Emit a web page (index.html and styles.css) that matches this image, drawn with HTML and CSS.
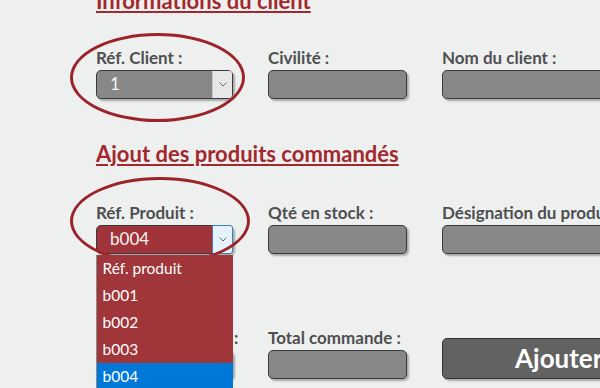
FILE: index.html
```html
<!DOCTYPE html>
<html lang="fr">

<head>
    <meta charset="UTF-8">
    <title>Commande client</title>
    <link rel="stylesheet" href="styles.css">
</head>

<body>
    <div class="page">
        <!-- Client -->
        <section class="block block-client">
            <h2 class="block-title">Informations du client</h2>
            <div class="row">
                <div class="field">
                    <span class="ring ring-client"></span>
                    <label class="label">Réf. Client :</label>
                    <div class="box combo">
                        <span class="combo-value">1</span>
                        <span class="combo-btn">
                            <svg width="8" height="5" viewBox="0 0 8 5"><path d="M0.5 0.5 L4 4 L7.5 0.5" fill="none" stroke="#6a6a6a" stroke-width="1"/></svg>
                        </span>
                    </div>
                </div>
                <div class="field">
                    <label class="label">Civilité :</label>
                    <div class="box"></div>
                </div>
                <div class="field">
                    <label class="label">Nom du client :</label>
                    <div class="box"></div>
                </div>
            </div>
        </section>

        <!-- Produits -->
        <section class="block">
            <h2 class="block-title">Ajout des produits commandés</h2>
            <div class="row row-products">
                <div class="field">
                    <span class="ring ring-product"></span>
                    <label class="label">Réf. Produit :</label>
                    <div class="box combo combo-active">
                        <span class="combo-value">b004</span>
                        <span class="combo-btn">
                            <svg width="8" height="5" viewBox="0 0 8 5"><path d="M0.5 0.5 L4 4 L7.5 0.5" fill="none" stroke="#5a6a7a" stroke-width="1"/></svg>
                        </span>
                        <ul class="dropdown">
                            <li>Réf. produit</li>
                            <li>b001</li>
                            <li>b002</li>
                            <li>b003</li>
                            <li class="selected">b004</li>
                        </ul>
                    </div>
                </div>
                <div class="field">
                    <label class="label">Qté en stock :</label>
                    <div class="box"></div>
                </div>
                <div class="field">
                    <label class="label">Désignation du produit :</label>
                    <div class="box"></div>
                </div>

                <div class="field field-hidden">
                    <label class="label">Qté commandée :</label>
                    <div class="box"></div>
                </div>
                <div class="field">
                    <label class="label">Total commande :</label>
                    <div class="box"></div>
                </div>
                <div class="field field-button">
                    <button class="add-button">Ajouter</button>
                </div>
            </div>
        </section>
    </div>
</body>

</html>
```

FILE: styles.css
```css
body {
    margin: 0;
    height: 388px;
    overflow: hidden;
    background-color: #eef0ef;
    font-family: Lato, "Liberation Sans", sans-serif;
}

.page {
    padding-left: 96px;
    margin-top: -12px;
}

.block-client {
    margin-bottom: 42px;
}

.block-title {
    margin: 0 0 36px;
    font-size: 22px;
    line-height: 26px;
    font-weight: 700;
    color: #a2282d;
    text-decoration: underline;
    text-decoration-thickness: 2px;
    text-underline-offset: 2px;
    white-space: nowrap;
}

.block-client .block-title {
    margin-bottom: 34px;
}

.row {
    display: grid;
    grid-template-columns: 137px 139px 200px;
    column-gap: 35px;
}

.row-products {
    row-gap: 74px;
}

.field {
    position: relative;
}

.label {
    display: block;
    margin-bottom: 2px;
    font-size: 17px;
    font-weight: 700;
    line-height: 20px;
    color: #4f4f4f;
    white-space: nowrap;
}

/* label of the first column, mostly hidden by the open list */
.field-hidden .label {
    letter-spacing: 0.6px;
}

.box {
    box-sizing: border-box;
    height: 29px;
    background-color: #888888;
    border: 1.5px solid #3b3b3b;
    border-radius: 5px;
    box-shadow: 2px 2px 2px rgba(0, 0, 0, 0.3);
}

/* combo boxes */
.combo {
    display: flex;
    position: relative;
}

.combo-value {
    flex: 1;
    padding-left: 13px;
    font-size: 17px;
    line-height: 26px;
    color: #f4f4f4;
}

.combo-btn {
    display: flex;
    align-items: center;
    justify-content: center;
    width: 19px;
    background-color: #e7e7e7;
    border-left: 1px solid #c4c4c4;
    border-radius: 0 3px 3px 0;
}

.combo-active {
    background-color: #a0343a;
}

.combo-active .combo-btn {
    background-color: #e5f1fb;
    border: 1px solid #3c7fc0;
    margin: -1px -1px -1px 0;
}

.dropdown {
    position: absolute;
    top: calc(100% + 1.5px);
    left: -1.5px;
    z-index: 2;
    width: 137px;
    margin: 0;
    padding: 0;
    list-style: none;
    background-color: #a0353a;
    border-left: 1px solid #8a8a8a;
    box-sizing: border-box;
}

.dropdown li {
    height: 27px;
    padding-left: 6px;
    font-size: 15.5px;
    line-height: 27px;
    color: #ffffff;
}

.dropdown .selected {
    background-color: #0078d7;
}

/* red rings drawn around the key fields */
.ring {
    position: absolute;
    z-index: 1;
    box-sizing: border-box;
    border: 3px solid #9c2329;
    border-radius: 50%;
    pointer-events: none;
}

.ring-client {
    left: -26px;
    top: -15px;
    width: 175px;
    height: 89px;
}

.ring-product {
    left: -26px;
    top: -26px;
    width: 180px;
    height: 88px;
}

/* button */
.field-button {
    align-self: end;
}

.add-button {
    display: block;
    box-sizing: border-box;
    width: 200px;
    height: 41px;
    padding: 0 0 2px 72px;
    text-align: left;
    background-color: #626262;
    border: 1.5px solid #333333;
    border-radius: 5px;
    box-shadow: 2px 2px 2px rgba(0, 0, 0, 0.3);
    font-family: Lato, "Liberation Sans", sans-serif;
    font-size: 26px;
    font-weight: 700;
    color: #ffffff;
}
```
